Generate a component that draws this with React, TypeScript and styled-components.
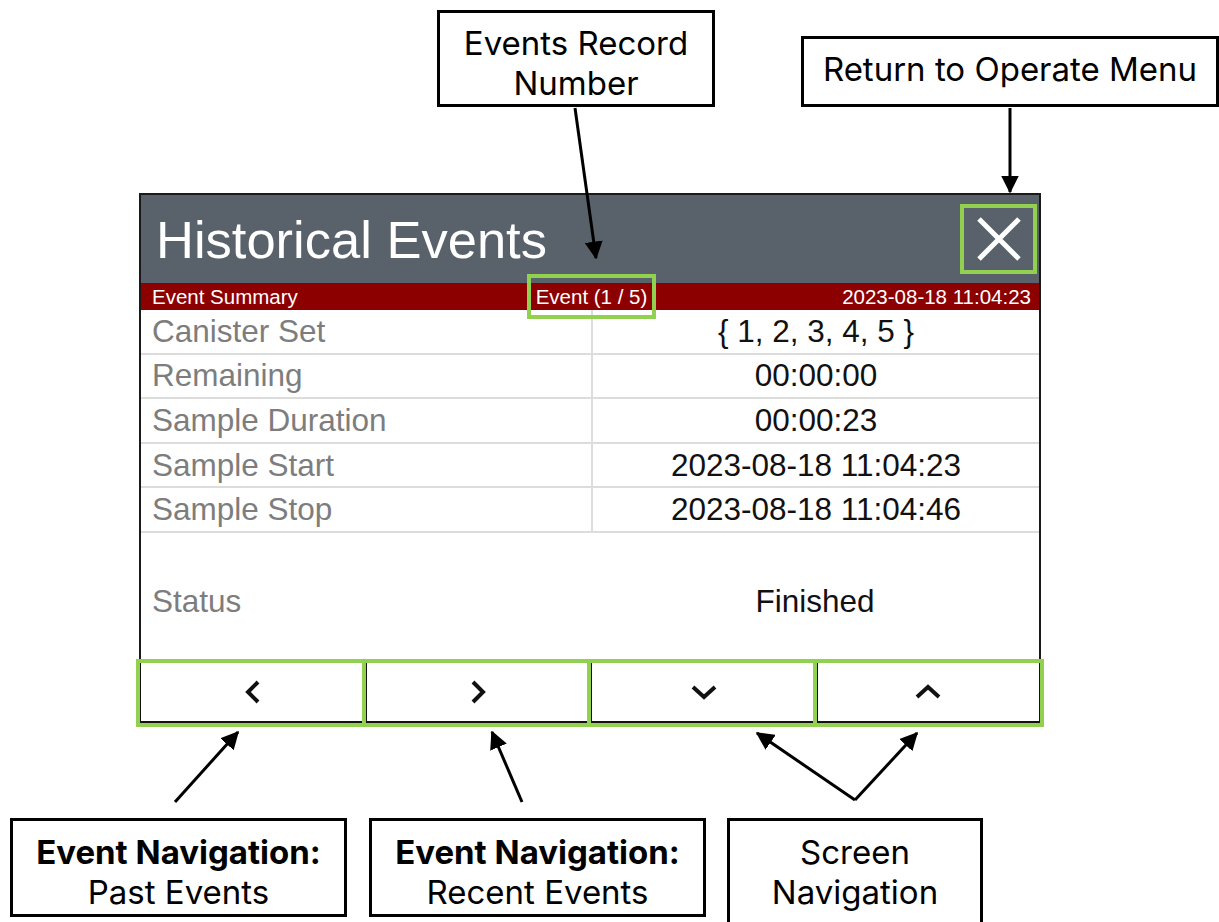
import React from 'react'
import styled, { createGlobalStyle } from 'styled-components'

const green = '#92d050'

const GlobalStyle = createGlobalStyle`
    html, body {
        margin: 0;
        padding: 0;
        background: #fff;
    }
    body {
        width: 1219px;
        height: 922px;
        overflow: hidden;
        font-family: 'Liberation Sans', Arial, sans-serif;
    }
`

const rows = [
    { label: 'Canister Set', value: '{ 1, 2, 3, 4, 5 }' },
    { label: 'Remaining', value: '00:00:00' },
    { label: 'Sample Duration', value: '00:00:23' },
    { label: 'Sample Start', value: '2023-08-18 11:04:23' },
    { label: 'Sample Stop', value: '2023-08-18 11:04:46' },
]

const Chevron: React.FC<{ dir: 'left' | 'right' | 'down' | 'up' }> = ({ dir }) => {
    const points = {
        left: '14,3 4,13 14,23',
        right: '4,3 14,13 4,23',
        down: '3,3 14,13 25,3',
        up: '3,13 14,3 25,13',
    }[dir]
    const vertical = dir === 'left' || dir === 'right'
    return (
        <svg width={vertical ? 18 : 28} height={vertical ? 26 : 16} viewBox={vertical ? '0 0 18 26' : '0 0 28 16'}>
            <polyline points={points} fill="none" stroke="#111" strokeWidth="4" strokeLinejoin="miter" />
        </svg>
    )
}

const App: React.FC = () => {
    return (
        <Page>
            <GlobalStyle />
            <Panel>
                <Header>
                    <Title>Historical Events</Title>
                    <CloseButton>
                        <svg width="46" height="46" viewBox="0 0 46 46">
                            <path d="M3 3 L43 43 M43 3 L3 43" stroke="#fff" strokeWidth="5" />
                        </svg>
                    </CloseButton>
                </Header>

                <SubBar>
                    <span>Event Summary</span>
                    <Counter>Event (1 / 5)</Counter>
                    <DateText>2023-08-18 11:04:23</DateText>
                </SubBar>

                {rows.map((row) => (
                    <Row key={row.label}>
                        <Label>{row.label}</Label>
                        <Value>{row.value}</Value>
                    </Row>
                ))}

                <StatusRow>
                    <Label>Status</Label>
                    <Value $plain>Finished</Value>
                </StatusRow>

                <ButtonRow>
                    <NavButton><Chevron dir="left" /></NavButton>
                    <NavButton><Chevron dir="right" /></NavButton>
                    <NavButton><Chevron dir="down" /></NavButton>
                    <NavButton><Chevron dir="up" /></NavButton>
                </ButtonRow>
            </Panel>

            <Arrows width="1219" height="922" viewBox="0 0 1219 922">
                <defs>
                    <marker id="head" markerWidth="6" markerHeight="6" refX="5.5" refY="3" orient="auto" markerUnits="strokeWidth">
                        <path d="M0,0 L6,3 L0,6 z" fill="#000" />
                    </marker>
                </defs>
                <line x1="575" y1="108" x2="596" y2="258" markerEnd="url(#head)" />
                <line x1="1010" y1="108" x2="1010" y2="192" markerEnd="url(#head)" />
                <line x1="175" y1="802" x2="238" y2="732" markerEnd="url(#head)" />
                <line x1="522" y1="802" x2="492" y2="732" markerEnd="url(#head)" />
                <line x1="855" y1="800" x2="757" y2="733" markerEnd="url(#head)" />
                <line x1="855" y1="800" x2="917" y2="733" markerEnd="url(#head)" />
            </Arrows>

            <Callout $x={437} $y={10} $w={278} $h={97} $shift={8}>
                <Line>Events Record</Line>
                <Line>Number</Line>
            </Callout>
            <Callout $x={801} $y={36} $w={418} $h={71} $shift={-5}>
                <Line>Return to Operate Menu</Line>
            </Callout>
            <Callout $x={10} $y={818} $w={337} $h={99} $shift={8}>
                <Line $bold>Event Navigation:</Line>
                <Line>Past Events</Line>
            </Callout>
            <Callout $x={369} $y={818} $w={337} $h={99} $shift={8}>
                <Line $bold>Event Navigation:</Line>
                <Line>Recent Events</Line>
            </Callout>
            <Callout $x={727} $y={818} $w={256} $h={112} $shift={-4}>
                <Line>Screen</Line>
                <Line>Navigation</Line>
            </Callout>
        </Page>
    )
}

export default App

const Page = styled.div`
    position: relative;
    width: 1219px;
    height: 922px;
    box-sizing: border-box;
    padding: 193px 0 0 139px;
`

const Panel = styled.div`
    width: 902px;
    box-sizing: border-box;
    border: 2px solid #1a1a1a;
    border-bottom: none;
    background: #fff;
`

const Header = styled.div`
    height: 88px;
    background: #59626a;
    display: flex;
    align-items: center;
    justify-content: space-between;
    padding: 0 2px 0 15px;
`

const Title = styled.h1`
    margin: 0;
    font-family: 'Liberation Sans', Arial, sans-serif;
    font-weight: 400;
    font-size: 52.5px;
    color: #fff;
`

const CloseButton = styled.div`
    width: 77px;
    height: 70px;
    box-sizing: border-box;
    display: flex;
    align-items: center;
    justify-content: center;
    outline: 4px solid ${green};
    outline-offset: -4px;
`

const SubBar = styled.div`
    height: 27px;
    background: #8c0000;
    display: grid;
    grid-template-columns: 1fr auto 1fr;
    grid-template-rows: 27px;
    align-items: center;
    padding: 0 8px 0 11px;
    color: #fff;
    font-size: 20.5px;
    line-height: 27px;
`

const Counter = styled.span`
    position: relative;
    z-index: 2;
    display: inline-block;
    padding: 9px 9px;
    margin: -9px 0;
    outline: 4px solid ${green};
    outline-offset: -4px;
`

const DateText = styled.span`
    text-align: right;
`

const Row = styled.div`
    display: grid;
    grid-template-columns: 450px 1fr;
    height: 44.6px;
    box-sizing: border-box;
    border-bottom: 2px solid #dcdcdc;
    align-items: center;
`

const Label = styled.div`
    padding-left: 11px;
    color: #7d7d7d;
    font-size: 31.5px;
`

const Value = styled.div<{ $plain?: boolean }>`
    height: 100%;
    display: flex;
    align-items: center;
    justify-content: center;
    border-left: ${({ $plain }) => ($plain ? 'none' : '2px solid #dcdcdc')};
    color: #111;
    font-size: 31.5px;
`

const StatusRow = styled.div`
    display: grid;
    grid-template-columns: 450px 1fr;
    height: 129px;
    box-sizing: border-box;
    padding-top: 8px;
    align-items: center;
`

const ButtonRow = styled.div`
    display: grid;
    grid-template-columns: repeat(4, 1fr);
    margin: 0 -2px;
`

const NavButton = styled.div`
    height: 62px;
    box-sizing: border-box;
    display: flex;
    align-items: center;
    justify-content: center;
    background: #fff;
    border-top: 1px solid #a0a0a0;
    border-bottom: 3px solid #111;
    border-left: 2px solid #111;
    outline: 4px solid ${green};
    outline-offset: -1px;

    &:last-child {
        border-right: 2px solid #111;
    }
`

const Arrows = styled.svg`
    position: absolute;
    left: 0;
    top: 0;
    pointer-events: none;

    line {
        stroke: #000;
        stroke-width: 3px;
    }
`

const Callout = styled.div<{ $x: number; $y: number; $w: number; $h: number; $shift: number }>`
    position: absolute;
    left: ${({ $x }) => $x}px;
    top: ${({ $y }) => $y}px;
    width: ${({ $w }) => $w}px;
    height: ${({ $h }) => $h}px;
    box-sizing: border-box;
    border: 3px solid #000;
    background: #fff;
    display: flex;
    flex-direction: column;
    align-items: center;
    justify-content: center;
    padding-top: ${({ $shift }) => Math.max($shift, 0)}px;
    padding-bottom: ${({ $shift }) => Math.max(-$shift, 0)}px;
    text-align: center;
    font-family: Inter, 'Noto Sans', sans-serif;
    font-size: 33px;
    line-height: 40px;
    color: #000;
`

const Line = styled.span<{ $bold?: boolean }>`
    display: block;
    white-space: nowrap;
    font-weight: ${({ $bold }) => ($bold ? 700 : 400)};
`
